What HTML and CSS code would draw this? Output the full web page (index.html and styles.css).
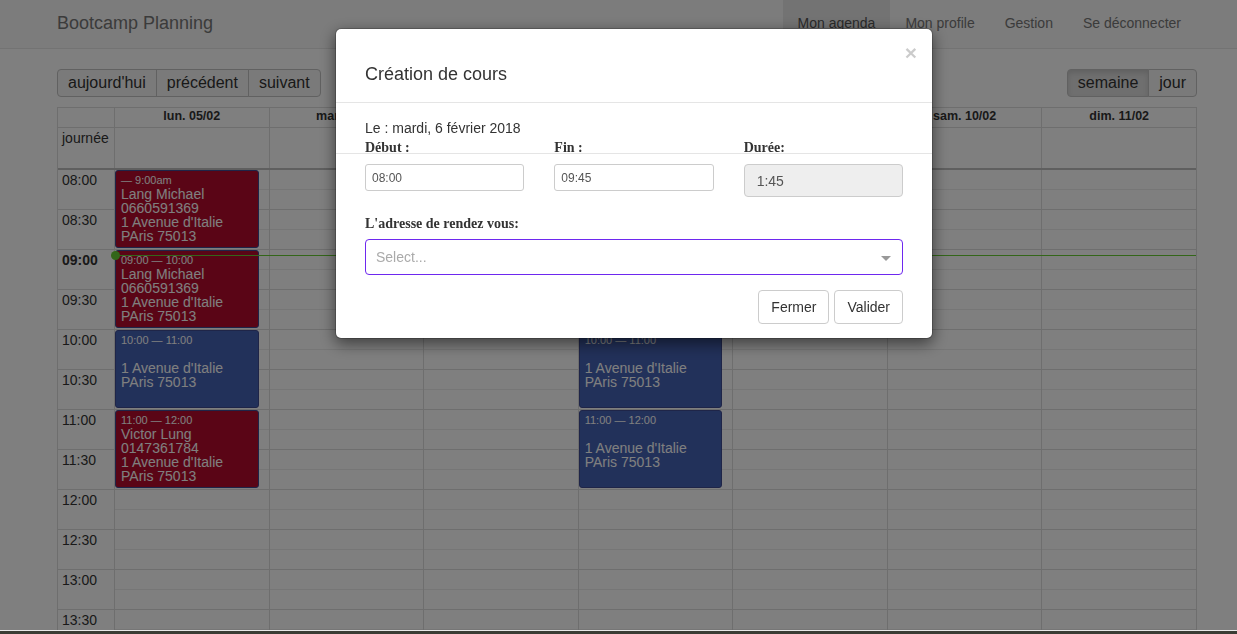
FILE: index.html
```html
<!DOCTYPE html>
<html lang="fr">
<head>
<meta charset="utf-8">
<title>Bootcamp Planning</title>
<link rel="stylesheet" href="styles.css">
</head>
<body>
<nav class="navbar">
  <div class="navbar-inner">
    <span class="brand">Bootcamp Planning</span>
    <ul class="nav">
      <li class="active"><a>Mon agenda</a></li>
      <li><a>Mon profile</a></li>
      <li><a>Gestion</a></li>
      <li><a>Se déconnecter</a></li>
    </ul>
  </div>
</nav>

<main class="page">
  <div class="toolbar">
    <div class="btn-group">
      <button class="fc-btn">aujourd'hui</button>
      <button class="fc-btn">précédent</button>
      <button class="fc-btn">suivant</button>
    </div>
    <div class="btn-group">
      <button class="fc-btn active">semaine</button>
      <button class="fc-btn">jour</button>
    </div>
  </div>

  <div class="cal">
    <div class="grid8 cal-head">
      <div></div>
      <div>lun. 05/02</div>
      <div>mar. 06/02</div>
      <div>mer. 07/02</div>
      <div>jeu. 08/02</div>
      <div>ven. 09/02</div>
      <div>sam. 10/02</div>
      <div>dim. 11/02</div>
    </div>
    <div class="grid8 allday">
      <div class="axis">journée</div>
      <div></div><div></div><div></div><div></div><div></div><div></div><div></div>
    </div>
    <div class="divider"></div>

    <div class="timegrid">
      <div class="slats">
        <div class="slat"><div class="axis">08:00</div><div class="slot"></div></div>
        <div class="slat"><div class="axis">08:30</div><div class="slot"></div></div>
        <div class="slat"><div class="axis now-label">09:00</div><div class="slot"></div></div>
        <div class="slat"><div class="axis">09:30</div><div class="slot"></div></div>
        <div class="slat"><div class="axis">10:00</div><div class="slot"></div></div>
        <div class="slat"><div class="axis">10:30</div><div class="slot"></div></div>
        <div class="slat"><div class="axis">11:00</div><div class="slot"></div></div>
        <div class="slat"><div class="axis">11:30</div><div class="slot"></div></div>
        <div class="slat"><div class="axis">12:00</div><div class="slot"></div></div>
        <div class="slat"><div class="axis">12:30</div><div class="slot"></div></div>
        <div class="slat"><div class="axis">13:00</div><div class="slot"></div></div>
        <div class="slat"><div class="axis">13:30</div><div class="slot"></div></div>
        <div class="slat"><div class="axis">14:00</div><div class="slot"></div></div>
      </div>

      <div class="grid8 cols">
        <div></div>
        <div class="col">
          <div class="event ev-red" style="top:0px;height:78px">
            <div class="ev-time">— 9:00am</div>
            <div class="ev-title">Lang Michael<br>0660591369<br>1 Avenue d'Italie<br>PAris 75013</div>
          </div>
          <div class="event ev-red" style="top:80px;height:78px">
            <div class="ev-time">09:00 — 10:00</div>
            <div class="ev-title">Lang Michael<br>0660591369<br>1 Avenue d'Italie<br>PAris 75013</div>
          </div>
          <div class="event ev-blue" style="top:160px;height:78px">
            <div class="ev-time">10:00 — 11:00</div>
            <div class="ev-title"><br>1 Avenue d'Italie<br>PAris 75013</div>
          </div>
          <div class="event ev-red" style="top:240px;height:78px">
            <div class="ev-time">11:00 — 12:00</div>
            <div class="ev-title">Victor Lung<br>0147361784<br>1 Avenue d'Italie<br>PAris 75013</div>
          </div>
        </div>
        <div class="col"></div>
        <div class="col"></div>
        <div class="col">
          <div class="event ev-blue" style="top:160px;height:78px">
            <div class="ev-time">10:00 — 11:00</div>
            <div class="ev-title"><br>1 Avenue d'Italie<br>PAris 75013</div>
          </div>
          <div class="event ev-blue" style="top:240px;height:78px">
            <div class="ev-time">11:00 — 12:00</div>
            <div class="ev-title"><br>1 Avenue d'Italie<br>PAris 75013</div>
          </div>
        </div>
        <div class="col"></div>
        <div class="col"></div>
        <div class="col"></div>
      </div>

      <div class="now-line"></div>
      <div class="now-dot"></div>
    </div>
  </div>
</main>

<div class="backdrop"></div>

<div class="modal-layer">
  <div class="modal">
    <div class="modal-header">
      <h4 class="modal-title">Création de cours</h4>
      <button class="close" type="button">×</button>
    </div>
    <div class="modal-body">
      <p class="date-line">Le : mardi, 6 février 2018</p>
      <div class="fields">
        <label class="field-label">Début :</label>
        <label class="field-label">Fin :</label>
        <label class="field-label">Durée:</label>
        <div class="sep"></div>
        <input class="input-sm" type="text" value="08:00" readonly>
        <input class="input-sm" type="text" value="09:45" readonly>
        <input class="input-ro" type="text" value="1:45" readonly>
      </div>
      <label class="field-label addr-label">L'adresse de rendez vous:</label>
      <div class="select">
        <span class="placeholder">Select...</span>
        <span class="arrow"></span>
      </div>
      <div class="modal-footer">
        <button class="btn" type="button">Fermer</button>
        <button class="btn" type="button">Valider</button>
      </div>
    </div>
  </div>
</div>

<div class="bottom-bar"></div>
</body>
</html>
```

FILE: styles.css
```css
* { box-sizing: border-box; }

html, body {
  margin: 0;
  height: 100%;
  overflow: hidden;
}

body {
  font-family: "Liberation Sans", Arial, Helvetica, sans-serif;
  font-size: 14px;
  line-height: 20px;
  color: #333;
  background: #fff;
}

/* ---------- navbar ---------- */
.navbar {
  height: 49px;
  background: #f8f8f8;
  border-bottom: 1px solid #e7e7e7;
}

.navbar-inner {
  display: flex;
  justify-content: space-between;
  height: 48px;
  padding: 0 41px 0 57px;
}

.brand {
  font-size: 18px;
  line-height: 46px;
  color: #777;
}

.nav {
  display: flex;
  margin: 0;
  padding: 0;
  list-style: none;
}

.nav a {
  display: block;
  height: 48px;
  padding: 0 15px;
  line-height: 46px;
  color: #777;
}

.nav .active a {
  background: #e7e7e7;
  color: #555;
}

/* ---------- page ---------- */
.page {
  padding: 20px 40px 0 57px;
}

.toolbar {
  display: flex;
  justify-content: space-between;
  height: 28px;
  margin-bottom: 10px;
}

.btn-group {
  display: flex;
}

.fc-btn {
  height: 28px;
  margin: 0;
  padding: 0 10px;
  font-family: "Liberation Sans", Arial, sans-serif;
  font-size: 16px;
  line-height: 26px;
  color: #333;
  background: #f5f5f5;
  border: 1px solid #c2c2c2;
  border-radius: 0;
}

.fc-btn + .fc-btn { margin-left: -1px; }
.fc-btn:first-child { border-radius: 4px 0 0 4px; }
.fc-btn:last-child { border-radius: 0 4px 4px 0; }

.fc-btn.active {
  background: #dedede;
  box-shadow: inset 0 3px 5px rgba(0, 0, 0, .125);
}

/* ---------- calendar ---------- */
.cal {
  border: 1px solid #ddd;
  border-bottom: 0;
}

.grid8 {
  display: grid;
  grid-template-columns: 56px repeat(7, 1fr);
}

.grid8 > div + div {
  border-left: 1px solid #ddd;
}

.cal-head {
  border-bottom: 1px solid #ddd;
}

.cal-head > div {
  height: 19px;
  padding-bottom: 3px;
  font-size: 12.5px;
  font-weight: bold;
  line-height: 16px;
  text-align: center;
  white-space: nowrap;
  overflow: hidden;
}

.allday > div {
  height: 40px;
}

.axis {
  padding: 0 4px;
  line-height: 20px;
  white-space: nowrap;
}

.divider {
  height: 2px;
  background: #bfbfbf;
}

.timegrid {
  position: relative;
}

.slat {
  display: flex;
  height: 40px;
  border-bottom: 1px solid #ddd;
}

.slat .axis {
  width: 56px;
  flex: none;
}

.now-label {
  font-weight: bold;
}

.slot {
  flex: 1;
  height: 20px;
  border-bottom: 1px solid #ececec;
}

.cols {
  position: absolute;
  inset: 0;
}

.col {
  position: relative;
}

.event {
  position: absolute;
  left: 0;
  right: 10px;
  padding: 2px 4px 0 5px;
  border: 1px solid #3e4a90;
  border-radius: 3px;
  color: #fff;
  overflow: hidden;
}

.ev-red { background: #b40b2c; }
.ev-blue { background: #4562b4; }

.ev-time {
  font-size: 11px;
  line-height: 14px;
  white-space: nowrap;
}

.ev-title {
  font-size: 14px;
  line-height: 14px;
  white-space: nowrap;
}

.now-line {
  position: absolute;
  top: 85px;
  left: 56px;
  right: 0;
  height: 1px;
  background: #66cc33;
}

.now-dot {
  position: absolute;
  top: 81px;
  left: 53px;
  width: 9px;
  height: 9px;
  border-radius: 50%;
  background: #66cc33;
}

/* ---------- modal ---------- */
.backdrop {
  position: fixed;
  inset: 0;
  z-index: 10;
  background: rgba(0, 0, 0, .5);
}

.modal-layer {
  position: fixed;
  inset: 0;
  z-index: 20;
  padding: 28px 0 0 335px;
}

.modal {
  width: 598px;
  background: #fff;
  background-clip: padding-box;
  border: 1px solid rgba(0, 0, 0, .2);
  border-radius: 6px;
  box-shadow: 0 5px 15px rgba(0, 0, 0, .5);
}

.modal-header {
  display: flex;
  align-items: flex-start;
  padding: 15px 15px 15px 29px;
  border-bottom: 1px solid #e5e5e5;
}

.modal-title {
  flex: 1;
  margin: 17px 0 0;
  font-size: 18px;
  font-weight: normal;
  line-height: 26px;
}

.close {
  margin-top: -2px;
  padding: 0;
  border: 0;
  background: none;
  font-family: "Liberation Sans", Arial, sans-serif;
  font-size: 21px;
  font-weight: bold;
  line-height: 1;
  color: #000;
  opacity: .2;
  text-shadow: 0 1px 0 #fff;
}

.modal-body {
  padding: 15px 29px 14px;
}

.date-line {
  margin: 0;
}

.fields {
  display: grid;
  grid-template-columns: repeat(3, 1fr);
  column-gap: 30px;
}

.field-label {
  display: block;
  margin: 0;
  font-family: "Liberation Serif", "Times New Roman", serif;
  font-size: 14px;
  font-weight: bold;
  line-height: 20px;
}

.sep {
  grid-column: 1 / -1;
  height: 1px;
  margin: -5px -29px 10px;
  background: #e5e5e5;
}

.input-sm,
.input-ro {
  align-self: start;
  width: 100%;
  margin: 0;
  font-family: "Liberation Sans", Arial, sans-serif;
  color: #555;
  border: 1px solid #ccc;
  outline: none;
}

.input-sm {
  height: 27px;
  padding: 0 6px;
  font-size: 12px;
  border-radius: 3px;
  background: #fff;
}

.input-ro {
  height: 33px;
  padding: 0 12px;
  font-size: 14px;
  border-radius: 4px;
  background: #eee;
}

.addr-label {
  margin: 17px 0 5px;
}

.select {
  display: flex;
  align-items: center;
  height: 36px;
  padding: 0 11px 0 10px;
  border: 1px solid #6e28ef;
  border-radius: 4px;
}

.placeholder {
  flex: 1;
  color: #aaa;
}

.arrow {
  width: 0;
  height: 0;
  margin-top: 4px;
  border-style: solid;
  border-width: 5px 5px 2.5px;
  border-color: #999 transparent transparent;
}

.modal-footer {
  display: flex;
  justify-content: flex-end;
  gap: 5px;
  margin-top: 15px;
}

.btn {
  height: 34px;
  margin: 0;
  padding: 6px 12px;
  font-family: "Liberation Sans", Arial, sans-serif;
  font-size: 14px;
  line-height: 20px;
  color: #333;
  background: #fff;
  border: 1px solid #ccc;
  border-radius: 4px;
}

/* ---------- bottom strip ---------- */
.bottom-bar {
  position: fixed;
  left: 0;
  right: 0;
  bottom: 0;
  z-index: 30;
  height: 4px;
  background: #3a3c34;
  border-top: 1px solid #e8e8e8;
}
```
